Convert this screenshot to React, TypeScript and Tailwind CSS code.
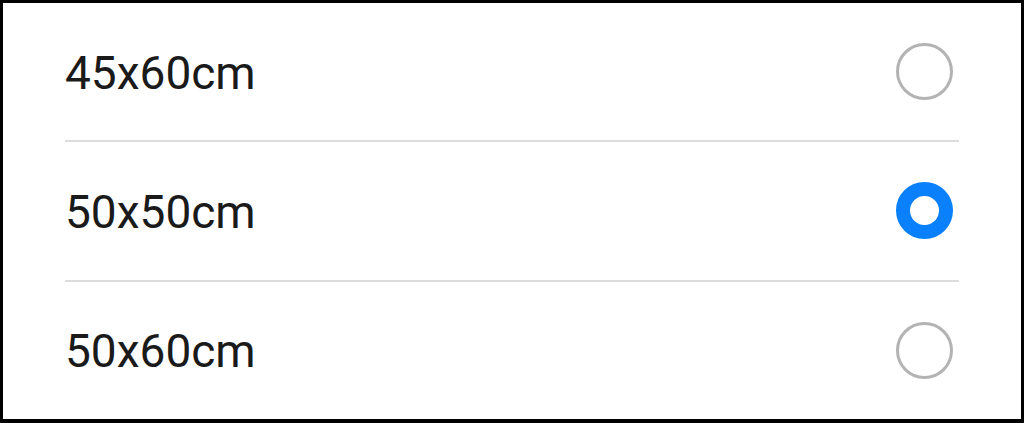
import React from "react";

const options = [
  { label: "45x60cm", selected: false },
  { label: "50x50cm", selected: true },
  { label: "50x60cm", selected: false },
];

export default function App() {
  return (
    <div className="w-[1024px] h-[423px] bg-white border-black border-t-[3px] border-l-[3px] border-r-[3px] border-b-[4px] flex flex-col px-[62px]" style={{ fontFamily: 'Roboto, "Liberation Sans", Arial, sans-serif' }}>
      {options.map((o, i) => (
        <React.Fragment key={o.label}>
          {i > 0 && <div className="h-[2px] bg-[#dcdcdc] shrink-0" />}
          <div className="flex-1 flex items-center justify-between pr-[6px]">
            <span className="text-[46px] leading-none text-[#1a1a1a] pt-[2px]">{o.label}</span>
            {o.selected ? (
              <div className="w-[57px] h-[57px] rounded-full border-[14px] border-[#0a80fc] bg-white" />
            ) : (
              <div className="w-[57px] h-[57px] rounded-full border-[3px] border-[#b3b3b3] bg-white" />
            )}
          </div>
        </React.Fragment>
      ))}
    </div>
  );
}
